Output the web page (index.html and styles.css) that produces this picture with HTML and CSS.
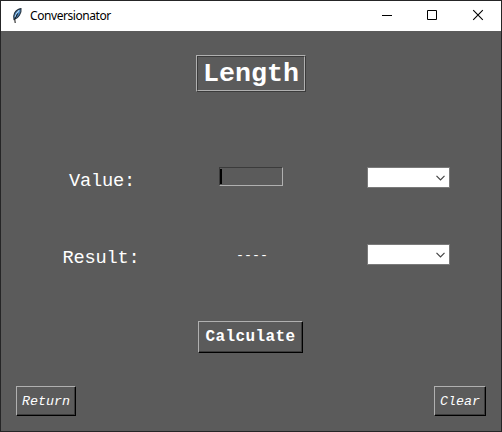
FILE: index.html
```html
<!DOCTYPE html>
<html lang="en">
<head>
<meta charset="utf-8">
<title>Conversionator</title>
<link rel="stylesheet" href="styles.css">
</head>
<body>
<div class="window">
  <header class="titlebar">
    <svg class="feather" width="14" height="18" viewBox="0 0 14 18">
      <path d="M11 1.6 Q7 2.2 4.6 6 Q3 9.4 4 12.5 Q7.6 11.4 9.4 8.2 Q11.6 4.6 11 1.6Z" fill="#4681bd" stroke="#26323d" stroke-width="1.1"/>
      <path d="M9.2 3.4 Q6 6.3 5.1 10" fill="none" stroke="#b7dcf4" stroke-width="1.1"/>
      <path d="M7.6 6.5 L4.8 12.5 L5.2 16" fill="none" stroke="#111" stroke-width="1"/>
    </svg>
    <span class="name">Conversionator</span>
    <div class="controls">
      <svg width="46" height="30" viewBox="0 0 46 30"><path d="M18 14.5H28" stroke="#000"/></svg>
      <svg width="45" height="30" viewBox="0 0 45 30"><path d="M17.5 9.5h9v9h-9z" fill="none" stroke="#000"/></svg>
      <svg width="46" height="30" viewBox="0 0 46 30"><path d="M18.2 9.2l9.6 9.6M27.8 9.2l-9.6 9.6" stroke="#000" stroke-width="1.1"/></svg>
    </div>
  </header>
  <main class="content">
    <h1 class="heading"><span>Length</span></h1>
    <div class="row">
      <span class="label">Value:</span>
      <div class="entry"><i class="caret"></i></div>
      <div class="select"><svg width="9" height="6" viewBox="0 0 9 6"><path d="M.5 .8L4.5 4.8L8.5 .8" fill="none" stroke="#444" stroke-width="1.2"/></svg></div>
    </div>
    <div class="row result">
      <span class="label">Result:</span>
      <span class="output">----</span>
      <div class="select"><svg width="9" height="6" viewBox="0 0 9 6"><path d="M.5 .8L4.5 4.8L8.5 .8" fill="none" stroke="#444" stroke-width="1.2"/></svg></div>
    </div>
    <button class="btn calculate">Calculate</button>
    <footer class="actions">
      <button class="btn return">Return</button>
      <button class="btn clear">Clear</button>
    </footer>
  </main>
</div>
</body>
</html>
```
FILE: styles.css
```css
* { box-sizing: border-box; }
body { margin: 0; overflow: hidden; }
.window {
  width: 502px;
  height: 432px;
  border: 1px solid #252526;
  background: #5b5b5b;
  display: flex;
  flex-direction: column;
}
.titlebar {
  height: 30px;
  background: #fff;
  display: flex;
  align-items: center;
  padding-left: 9px;
}
.feather { margin-top: -1px; }
.name {
  margin-left: 6px;
  font: 12px/16px "Noto Sans", sans-serif;
  letter-spacing: -0.43px;
  color: #000;
}
.controls { margin-left: auto; display: flex; }
.content {
  flex: 1;
  display: flex;
  flex-direction: column;
  align-items: center;
  padding-top: 24px;
  color: #fff;
  font-family: "Courier New", "Liberation Mono", monospace;
}
.heading {
  margin: 0;
  width: 110px;
  height: 37px;
  border: 1px solid;
  border-color: #b0b0b0 #3b3b3b #3b3b3b #b0b0b0;
  font-size: 26.67px;
  line-height: 34px;
  text-align: center;
}
.heading span {
  display: block;
  height: 35px;
  border: 1px solid;
  border-color: #3b3b3b #b0b0b0 #b0b0b0 #3b3b3b;
}
.row {
  width: 500px;
  height: 21px;
  margin-top: 75px;
  display: grid;
  grid-template-columns: 202px 96px 202px;
  justify-items: center;
  font-size: 18.67px;
  line-height: 28px;
}
.result { margin-top: 56px; }
.label { letter-spacing: -0.2px; }
.result .label { padding-right: 2px; }
.output { font-size: 13.33px; line-height: 23px; padding-left: 2px; }
.entry {
  width: 64px;
  height: 19px;
  border: 1px solid;
  border-color: #3b3b3b #b0b0b0 #b0b0b0 #3b3b3b;
  padding-top: 1px;
}
.caret { display: block; width: 2px; height: 15px; background: #000; }
.select {
  width: 83px;
  height: 21px;
  margin-left: 17px;
  border: 1px solid #7a7a7a;
  background: #fff;
  display: flex;
  align-items: center;
  justify-content: flex-end;
  padding-right: 4px;
}
.btn {
  padding: 0;
  border: 1px solid;
  border-color: #b0b0b0 #000 #000 #b0b0b0;
  box-shadow: inset -1px -1px #3b3b3b;
  background: #5b5b5b;
  color: #fff;
  font-family: inherit;
}
.calculate {
  width: 105px;
  height: 32px;
  margin: 56px 1px 0 0;
  font-size: 16px;
  font-weight: bold;
  letter-spacing: 0.4px;
}
.actions {
  width: 500px;
  margin-top: 33px;
  padding: 0 15px;
  display: flex;
  justify-content: space-between;
}
.return, .clear { height: 30px; font-size: 13.33px; font-style: italic; }
.return { width: 60px; }
.clear { width: 52px; }
```
